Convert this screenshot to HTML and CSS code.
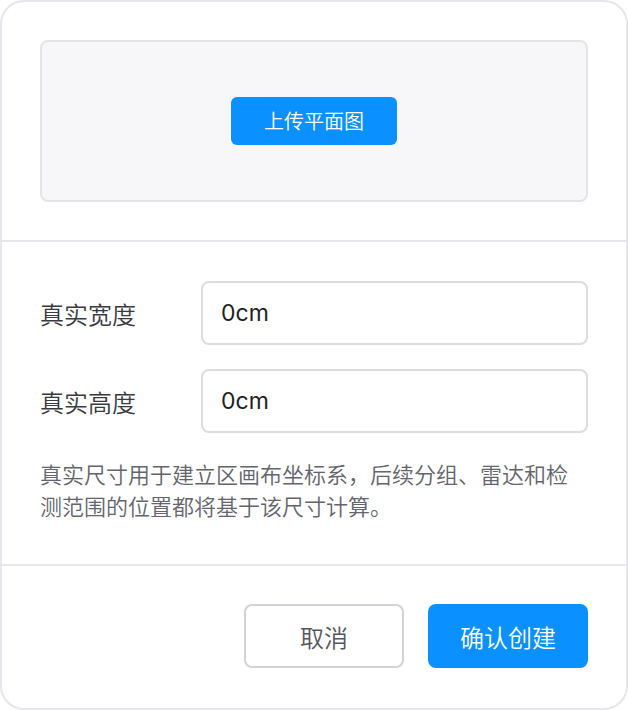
FILE: index.html
```html
<!DOCTYPE html>
<html lang="zh-CN">
<head>
<meta charset="utf-8">
<title>创建区域</title>
<link rel="stylesheet" href="styles.css">
</head>
<body>
<div class="card">
  <section class="upload-section">
    <div class="upload-box">
      <button class="btn-upload" type="button">上传平面图</button>
    </div>
  </section>
  <section class="form-section">
    <div class="form-row">
      <label class="form-label">真实宽度</label>
      <input class="form-input" type="text" value="0cm">
    </div>
    <div class="form-row">
      <label class="form-label">真实高度</label>
      <input class="form-input" type="text" value="0cm">
    </div>
    <p class="help-text">真实尺寸用于建立区画布坐标系，后续分组、雷达和检测范围的位置都将基于该尺寸计算。</p>
  </section>
  <footer class="footer">
    <button class="btn btn-cancel" type="button">取消</button>
    <button class="btn btn-primary" type="button">确认创建</button>
  </footer>
</div>
</body>
</html>
```
FILE: styles.css
```css
* { box-sizing: border-box; }
html, body {
  margin: 0;
  padding: 0;
  background: #ffffff;
}
body {
  font-family: "Noto Sans CJK SC", "Noto Sans", sans-serif;
  font-weight: 350;
  width: 628px;
  height: 710px;
}
.card {
  width: 628px;
  height: 710px;
  border: 2px solid #e6e6eb;
  border-radius: 24px;
  background: #ffffff;
  display: flex;
  flex-direction: column;
  overflow: hidden;
}
.upload-section {
  padding: 38px 38px 38px;
  border-bottom: 2px solid #e6e6eb;
}
.upload-box {
  height: 162px;
  border: 2px solid #e3e3e8;
  border-radius: 8px;
  background: #f7f7f9;
  display: flex;
  align-items: center;
  justify-content: center;
}
.btn-upload {
  width: 166px;
  height: 48px;
  border: none;
  border-radius: 6px;
  background: #0a91ff;
  color: #ffffff;
  font-family: inherit;
  font-weight: 350;
  font-size: 20px;
  padding: 0;
  line-height: 48px;
}
.form-section {
  padding: 39px 38px 43px;
  border-bottom: 2px solid #e6e6eb;
  display: flex;
  flex-direction: column;
  gap: 24px;
}
.form-row {
  display: flex;
  align-items: center;
}
.form-label {
  width: 161px;
  flex: none;
  font-size: 24px;
  color: #3a3a42;
}
.form-input {
  flex: 1;
  width: 0;
  min-width: 0;
  height: 64px;
  border: 2px solid #dcdce1;
  border-radius: 8px;
  padding: 0 18px;
  font-family: Inter, "Noto Sans CJK SC", sans-serif;
  font-weight: 400;
  font-size: 23px;
  color: #1f1f24;
  background: #ffffff;
  outline: none;
}
.help-text {
  margin: 0;
  font-size: 22px;
  line-height: 32px;
  color: #64646d;
}
.footer {
  flex: 1;
  display: flex;
  justify-content: flex-end;
  align-items: flex-start;
  gap: 24px;
  padding: 38px 38px 0;
}
.btn {
  width: 160px;
  height: 64px;
  border-radius: 8px;
  font-family: inherit;
  font-weight: 350;
  font-size: 24px;
  padding: 0;
}
.btn-cancel {
  background: #ffffff;
  border: 2px solid #d2d2d8;
  color: #55555e;
}
.btn-primary {
  background: #0a91ff;
  border: none;
  color: #ffffff;
}
```
